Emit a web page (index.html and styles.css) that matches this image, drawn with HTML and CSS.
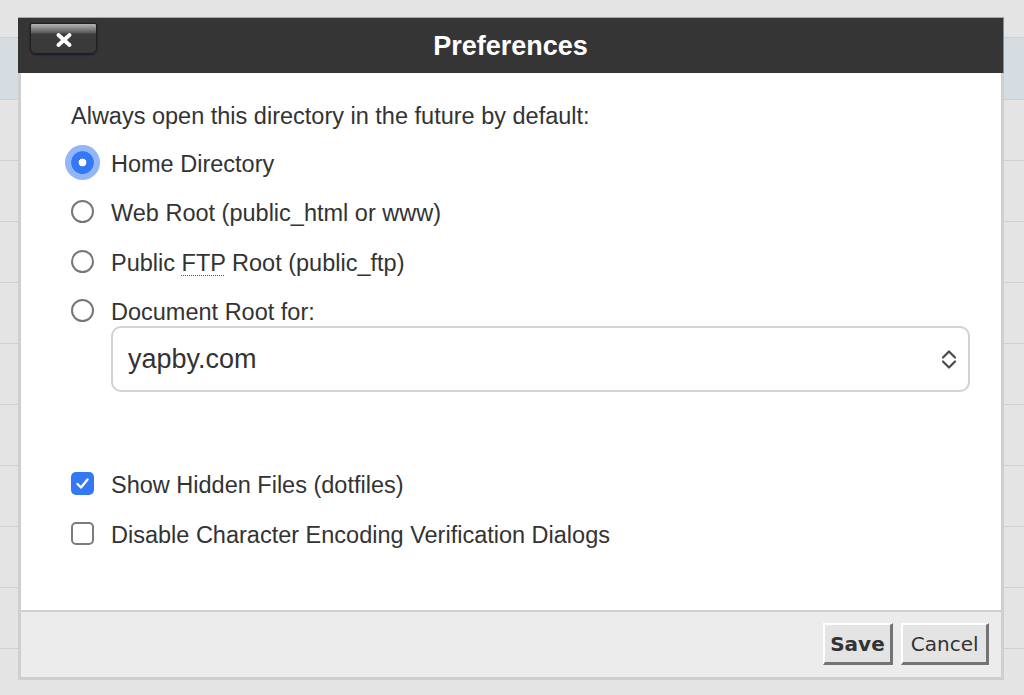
FILE: index.html
```html
<!DOCTYPE html>
<html lang="en">
<head>
<meta charset="utf-8">
<title>Preferences</title>
<link rel="stylesheet" href="styles.css">
</head>
<body>
<div class="page">
  <div class="page-head"></div>
  <div class="page-row is-selected"></div>
  <div class="page-row"></div>
  <div class="page-row"></div>
  <div class="page-row"></div>
  <div class="page-row"></div>
  <div class="page-row"></div>
  <div class="page-row"></div>
  <div class="page-row"></div>
  <div class="page-row"></div>
  <div class="page-row"></div>
</div>

<div class="dialog" role="dialog" aria-labelledby="dlg-title">
  <div class="titlebar">
    <button class="close" type="button" aria-label="Close">
      <svg width="16" height="14" viewBox="0 0 16 14" aria-hidden="true">
        <path d="M2.5 2 L13.5 12 M13.5 2 L2.5 12" stroke="#fff" stroke-width="3.8" stroke-linecap="round"/>
      </svg>
    </button>
    <h1 id="dlg-title" class="title">Preferences</h1>
  </div>
  <div class="frame">
    <div class="content">
      <p class="prompt">Always open this directory in the future by default:</p>
      <label class="option"><span class="radio is-checked"></span><span>Home Directory</span></label>
      <label class="option"><span class="radio"></span><span>Web Root (public_html or www)</span></label>
      <label class="option"><span class="radio"></span><span>Public <abbr title="File Transfer Protocol">FTP</abbr> Root (public_ftp)</span></label>
      <label class="option"><span class="radio"></span><span>Document Root for:</span></label>
      <div class="select">
        <span class="select-value">yapby.com</span>
        <svg class="select-arrows" width="16" height="21" viewBox="0 0 16 21" aria-hidden="true">
          <path d="M2 8.5 L8 2.5 L14 8.5 M2 12.5 L8 18.5 L14 12.5" fill="none" stroke="#4a4a4a" stroke-width="2.2" stroke-linecap="round" stroke-linejoin="round"/>
        </svg>
      </div>
      <div class="checks">
        <label class="option"><span class="checkbox is-checked">
          <svg width="23" height="23" viewBox="0 0 23 23" aria-hidden="true"><path d="M6.5 12 L10 15.5 L16.5 7.5" fill="none" stroke="#fff" stroke-width="2.4" stroke-linecap="round" stroke-linejoin="round"/></svg>
        </span><span>Show Hidden Files (dotfiles)</span></label>
        <label class="option"><span class="checkbox"></span><span>Disable Character Encoding Verification Dialogs</span></label>
      </div>
    </div>
    <div class="footer">
      <button class="btn btn-primary" type="button">Save</button>
      <button class="btn" type="button">Cancel</button>
    </div>
  </div>
</div>
</body>
</html>
```

FILE: styles.css
```css
* { box-sizing: border-box; }

html, body {
  margin: 0;
  padding: 0;
  width: 1024px;
  height: 695px;
  overflow: hidden;
  background: #e4e4e4;
  font-family: "Liberation Sans", Arial, Helvetica, sans-serif;
}

/* background page */
.page {
  display: flex;
  flex-direction: column;
}
.page-head {
  height: 38px;
  border-bottom: 1px solid #d0d0d0;
}
.page-row {
  height: 61px;
  border-bottom: 1px solid #d0d0d0;
  background: #e4e4e4;
}
.page-row.is-selected {
  height: 62px;
  background: #d5dde3;
}

/* dialog */
.dialog {
  position: absolute;
  left: 18px;
  top: 17px;
  width: 986px;
  height: 663px;
  display: flex;
  flex-direction: column;
}

.titlebar {
  position: relative;
  height: 56px;
  background: #353535;
  border-top: 1px solid #a9a9a9;
  border-right: 1px solid #8a8a8a;
  display: flex;
  align-items: center;
  justify-content: center;
}
.title {
  margin: 0;
  padding-top: 2px;
  color: #fff;
  font-size: 27px;
  font-weight: bold;
  line-height: 55px;
}
.close {
  position: absolute;
  left: 12px;
  top: 5px;
  width: 67px;
  height: 31px;
  padding: 0;
  border: 1px solid #1e1e1e;
  border-radius: 2px 2px 6px 6px;
  background: linear-gradient(#b4b4b4 0%, #8a8a8a 14%, #5c5b5b 30%, #3d3c3c 34%, #3a3939 100%);
  box-shadow: 0 1px 2px rgba(10, 20, 40, 0.8);
  display: flex;
  align-items: center;
  justify-content: center;
}
.close svg { display: block; margin-top: 2px; }

.frame {
  flex: 1;
  display: flex;
  flex-direction: column;
  border: 3px solid #cfcfcf;
  border-top: 0;
  background: #fff;
}

.content {
  flex: 1;
  padding: 17.5px 31px 0 50px;
  color: #333;
  font-size: 23.5px;
}

.prompt {
  margin: 0;
  height: 49.3px;
  padding-top: 3px;
  display: flex;
  align-items: center;
}

.option {
  height: 49.3px;
  display: flex;
  align-items: center;
  gap: 17px;
}

abbr {
  text-decoration: underline dotted #555;
  text-underline-offset: 4px;
  text-decoration-thickness: 1px;
}

.radio {
  width: 23px;
  height: 23px;
  flex: none;
  margin-bottom: 4px;
  border-radius: 50%;
  border: 2px solid #777;
  background: #fff;
}
.radio.is-checked {
  border: 0;
  background: radial-gradient(circle, #fff 0, #fff 3.6px, #3478f6 4.2px);
  box-shadow: 0 0 0 6px #92b6f7;
}

.checkbox {
  width: 23px;
  height: 23px;
  flex: none;
  margin-bottom: 4px;
  border-radius: 5px;
  border: 2px solid #7c7c7c;
  background: #fff;
}
.checkbox.is-checked {
  border: 0;
  background: #3478f6;
}
.checkbox svg { display: block; }

.select {
  margin: -11px 0 0 40px;
  height: 66px;
  border: 2px solid #d2d2d2;
  border-radius: 10px;
  display: flex;
  align-items: center;
  justify-content: space-between;
  padding: 1px 11px 0 15px;
  font-size: 27px;
  color: #333;
}
.select-arrows { display: block; }

.checks {
  margin-top: 69px;
}
.checks .option {
  height: 50px;
}

.footer {
  height: 67px;
  border-top: 2px solid #cfcfcf;
  background: #ececec;
  display: flex;
  justify-content: flex-end;
  align-items: flex-start;
  gap: 8px;
  padding: 11px 12px 0 0;
}

.btn {
  height: 42px;
  padding: 0 7.5px;
  font-family: "DejaVu Sans", Verdana, sans-serif;
  font-size: 20px;
  color: #333;
  background: #e4e4e4;
  border-style: solid;
  border-width: 2px 3px 3px 2px;
  border-color: #fff #737373 #737373 #fff;
  border-radius: 0;
}
.btn-primary {
  font-weight: bold;
  padding: 0 5.5px;
}
```
